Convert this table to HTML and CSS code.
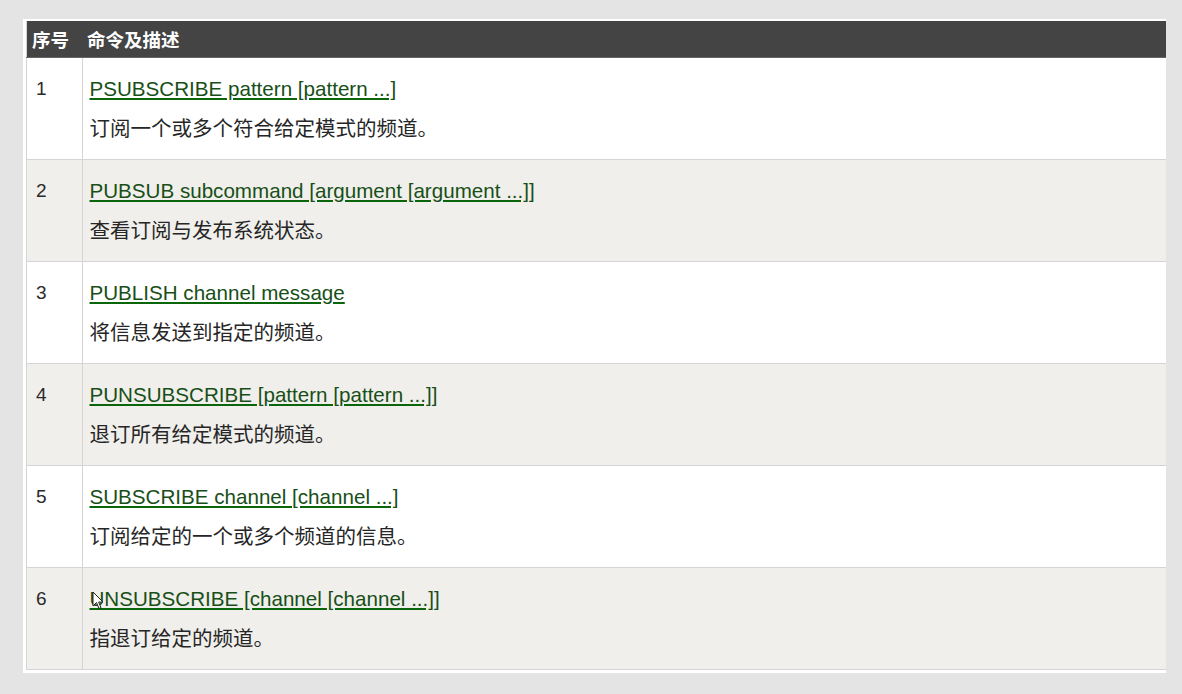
FILE: index.html
```html
<!DOCTYPE html>
<html lang="zh-CN">
<head>
    <meta charset="UTF-8">
    <meta name="viewport" content="width=device-width, initial-scale=1.0">
    <title>Redis 发布订阅命令</title>
    <link rel="stylesheet" href="styles.css">
</head>
<body>

    <!-- Command table -->
    <div class="panel">
        <table class="cmd-table">
            <thead>
                <tr>
                    <th class="col-no">序号</th>
                    <th>命令及描述</th>
                </tr>
            </thead>
            <tbody>
                <tr>
                    <td class="col-no">1</td>
                    <td><a href="#">PSUBSCRIBE pattern [pattern ...]</a><p>订阅一个或多个符合给定模式的频道。</p></td>
                </tr>
                <tr>
                    <td class="col-no">2</td>
                    <td><a href="#">PUBSUB subcommand [argument [argument ...]]</a><p>查看订阅与发布系统状态。</p></td>
                </tr>
                <tr>
                    <td class="col-no">3</td>
                    <td><a href="#">PUBLISH channel message</a><p>将信息发送到指定的频道。</p></td>
                </tr>
                <tr>
                    <td class="col-no">4</td>
                    <td><a href="#">PUNSUBSCRIBE [pattern [pattern ...]]</a><p>退订所有给定模式的频道。</p></td>
                </tr>
                <tr>
                    <td class="col-no">5</td>
                    <td><a href="#">SUBSCRIBE channel [channel ...]</a><p>订阅给定的一个或多个频道的信息。</p></td>
                </tr>
                <tr>
                    <td class="col-no">6</td>
                    <td class="has-cursor"><a href="#">UNSUBSCRIBE [channel [channel ...]]</a><p>指退订给定的频道。</p>
                        <!-- mouse pointer caught in the capture -->
                        <svg class="cursor" width="12" height="19" viewBox="0 0 12 19">
                            <path d="M1 1 L1 15 L4.5 11.5 L7 17.5 L9 16.6 L6.6 11 L11 11 Z" fill="#fff" stroke="#222" stroke-width="1"/>
                        </svg>
                    </td>
                </tr>
            </tbody>
        </table>
    </div>

</body>
</html>
```

FILE: styles.css
```css
/* General styles */
body {
    margin: 0;
    padding: 19px 16px 21px 23px;
    background-color: #e4e4e4;
    font-family: 'Liberation Sans', Arial, 'Noto Sans CJK SC', sans-serif;
    color: #333;
}

/* White frame around the table */
.panel {
    width: 1140px;
    background-color: #fff;
    padding: 2px 0 3px 3px;
}

.cmd-table {
    width: 100%;
    border-collapse: collapse;
    border-left: 1px solid #d4d4d4;
}

/* Header */
.cmd-table th {
    background-color: #444;
    color: #fff;
    font-size: 18.5px;
    font-weight: bold;
    text-align: left;
    height: 36px;
    padding: 0 0 0 5px;
    border-bottom: 1px solid #666;
    font-family: 'Noto Sans CJK SC', sans-serif;
}

.cmd-table th.col-no {
    width: 50px;
    padding-left: 5px;
}

/* Rows */
.cmd-table td {
    height: 102px;
    box-sizing: border-box;
    vertical-align: top;
    padding: 18px 0 0 7px;
    border-bottom: 1px solid #d4d4d4;
}

.cmd-table td.col-no {
    border-right: 1px solid #d4d4d4;
    padding-left: 9px;
    font-size: 19px;
    line-height: 26px;
    color: #2a2a2a;
}

.cmd-table tbody tr:nth-child(even) td {
    background-color: #f0efeb;
}

.cmd-table td a {
    display: inline-block;
    color: #184f18;
    font-size: 20.6px;
    line-height: 26px;
    text-decoration: underline;
    text-decoration-color: #0b650b;
}

.cmd-table td p {
    margin: 12px 0 0;
    font-family: 'Noto Sans CJK SC', sans-serif;
    font-size: 20.5px;
    line-height: 26px;
    color: #262626;
}

/* Pointer overlay */
.has-cursor {
    position: relative;
}

.cursor {
    position: absolute;
    left: 9px;
    top: 23px;
}
```
